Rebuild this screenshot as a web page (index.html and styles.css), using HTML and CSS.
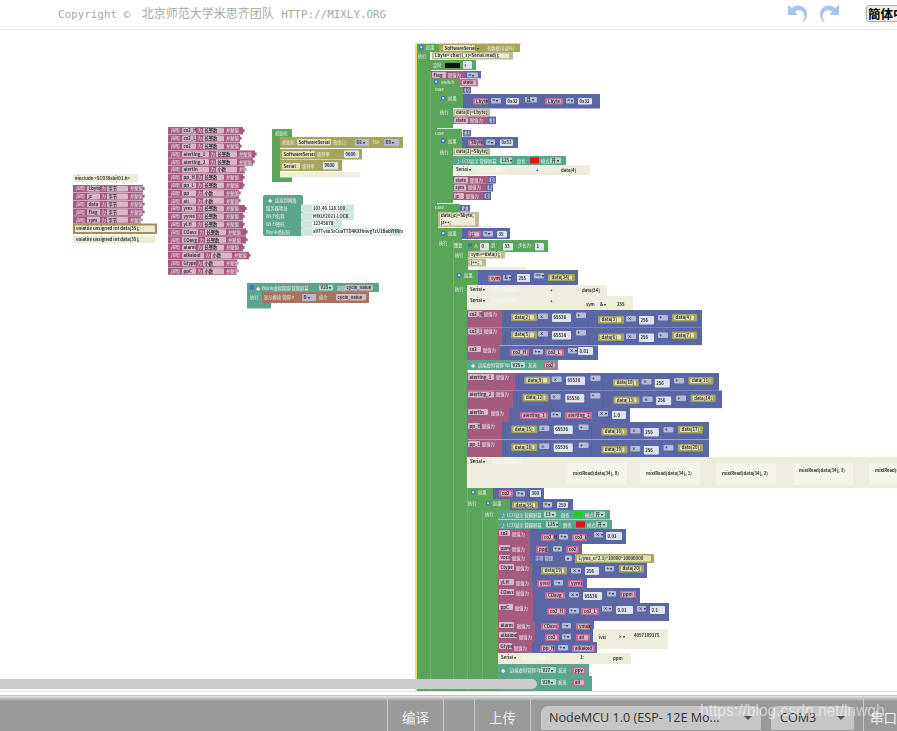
FILE: index.html
```html
<!DOCTYPE html>
<html lang="zh">
<head>
<meta charset="utf-8">
<title>Mixly</title>
<link rel="stylesheet" href="styles.css">
</head>
<body>
<header class="topbar">
  <p class="copyright">Copyright © <span class="cn">北京师范大学米思齐团队</span> HTTP://MIXLY.ORG</p>
  <div class="history">
    <svg class="hist-icon" viewBox="0 0 20 20"><path d="M0 2V12H10L7 9C10 6 15 7 16 11C17 14 16 17 14 20C19 17 20 11 18 7C15 2 8 1 4 5Z"/></svg>
    <svg class="hist-icon flip" viewBox="0 0 20 20"><path d="M0 2V12H10L7 9C10 6 15 7 16 11C17 14 16 17 14 20C19 17 20 11 18 7C15 2 8 1 4 5Z"/></svg>
  </div>
  <button class="lang">簡体中文</button>
</header>
<main class="canvas">
  <svg id="workspace" class="workspace" viewBox="0 30 897 661" xmlns="http://www.w3.org/2000/svg"></svg>
  <div class="hscroll"></div>
</main>
<div class="splitter"></div>
<footer class="toolbar">
  <div class="tool-space"></div>
  <div class="tool tool-build">编译</div>
  <div class="tool tool-gap"></div>
  <div class="tool tool-upload">上传</div>
  <div class="selects">
    <div class="select select-board"><span>NodeMCU 1.0 (ESP- 12E Mo...</span><i class="caret"></i></div>
    <div class="select select-port"><span>COM3</span><i class="caret"></i></div>
  </div>
  <div class="tool tool-serial">串口监视器</div>
  <div class="watermark">https://blog.csdn.net/lnwqh</div>
</footer>
<script src="workspace.js"></script>
</body>
</html>
```
FILE: styles.css
```css
* { box-sizing: border-box; }
html, body { margin: 0; height: 100%; }
body {
  display: flex; flex-direction: column; height: 731px; overflow: hidden;
  background: #fff; font-family: "Noto Sans CJK SC", "Liberation Sans", sans-serif;
}
.topbar {
  flex: none; height: 30px; display: flex; align-items: flex-start;
  border-bottom: 1px solid #e4e4e4; padding-left: 58px; overflow: hidden;
}
.copyright {
  flex: none; margin: 5px 0 0; width: 730px; color: #a8a8a8; white-space: pre;
  font: 10.9px/16px "DejaVu Sans Mono", monospace;
}
.cn { margin: 0 1px 0 5px; font: 12px/16px "Noto Sans CJK SC", sans-serif; }
.history { display: flex; gap: 11px; padding-top: 3px; width: 78px; flex: none; }
.hist-icon { width: 20px; height: 20px; fill: #a9c4ea; }
.flip { transform: scaleX(-1); }
.lang {
  flex: none; width: 60px; height: 17px; margin: 5px 0 0; padding: 0 0 0 1px;
  text-align: left; white-space: nowrap; overflow: hidden;
  background: #eee; border: 1px solid #aaa; border-radius: 3px; color: #000;
  font: 700 12.5px/14px "Noto Sans CJK SC", sans-serif;
}
.canvas { position: relative; flex: none; height: 661px; overflow: hidden; }
.workspace { display: block; width: 897px; height: 661px; filter: blur(.4px); }
.hscroll {
  position: absolute; left: 0; top: 649px; width: 537px; height: 10px;
  border-radius: 0 5px 5px 0; background: #ccc;
}
.splitter { flex: none; height: 5px; border-top: 1px solid #e2e2e2; border-bottom: 1px solid #c4c4c4; }
.toolbar {
  position: relative; flex: 1; display: flex; align-items: stretch; min-height: 0;
  background: linear-gradient(#e8e8e8 0, #999 5px); color: #eee;
}
.tool-space { width: 387px; flex: none; }
.tool {
  flex: none; display: flex; align-items: center; justify-content: center;
  border-left: 1px solid #c8c8c8; font-size: 13.5px; padding-top: 7px;
}
.tool-build { width: 56px; }
.tool-gap { width: 31px; }
.tool-upload { width: 57px; border-right: 1px solid #c8c8c8; }
.selects { flex: none; display: flex; gap: 10px; padding: 10px 0 0 10px; width: 332px; }
.select {
  display: flex; align-items: center; justify-content: space-between; height: 24px;
  border-radius: 7px 7px 0 0; background: #c6c6c6; color: #333; padding: 0 9px 0 8px;
  font: 12.6px/24px "Open Sans", sans-serif; white-space: nowrap;
}
.select-board { width: 220px; }
.select-port { width: 83px; padding-left: 9px; }
.caret { width: 0; height: 0; border: 4px solid transparent; border-top: 4px solid #555; border-bottom: 0; }
.tool-serial {
  flex: 1; justify-content: flex-start; padding-left: 6px; white-space: nowrap; overflow: hidden;
}
.watermark {
  position: absolute; left: 700px; top: 5px; color: rgba(255,255,255,.55);
  font: 15.6px/20px "Liberation Sans", sans-serif; white-space: nowrap;
}
/* Blocks */
.g { fill: #5ba55b; } .gl { fill: #74b574; }
.y { fill: #e6df62; }
.p { fill: #a55b80; } .fp { fill: #d8b8c8; } .pk { fill: #c76a96; }
.b { fill: #5b67a5; } .fb { fill: #b4bad8; } .fn { fill: #dfe4f2; }
.be { fill: #4f5a97; }
.t { fill: #5ba58c; } .ft { fill: #b4d8cc; } .st { fill: #cfe6de; }
.o { fill: #a5a55b; } .fo { fill: #e2e2bc; }
.br { fill: #a5745b; }
.c { fill: #efeede; } .fc { fill: #f5f4e9; }
.k { fill: #bcbc92; } .kk { fill: #ecebd6; } .sel { fill: #a58e58; }
.ic { fill: #3c74b4; } .iw { fill: #d8e6f0; }
.red { fill: #e81414; } .grn { fill: #1ed01e; } .blk { fill: #111; }
.w { fill: #fff; }
text { font: 4.3px "Noto Sans CJK SC", "Liberation Sans", sans-serif; }
.lw { fill: #f0f0f0; }
.ld { fill: #333; font-weight: 700; }
.lf { fill: #fff; opacity: .75; }
```
FILE: workspace.js
```js
const svg = document.getElementById('workspace');
const NS = 'http://www.w3.org/2000/svg';
function add(tag, attrs, text) {
  const e = document.createElementNS(NS, tag);
  for (const k in attrs) e.setAttribute(k, attrs[k]);
  if (text !== undefined) e.textContent = text;
  svg.appendChild(e);
}
const r = (c, x, y, w, h, rx = 0) => add('rect', { class: c, x, y, width: w, height: h, rx });
const t = (x, y, s, c = 'lw') => add('text', { class: c, x, y }, s);
const f = (c, x, y, w, h, s) => { r(c, x, y, w, h, 1); t(x + 1.5, y + h / 2 + 1.6, s, 'ld'); };

/* declaration row: 声明 name 为 type 并赋值 */
function decl(x, y, end, name, nw, type) {
  r('p', x, y, end - x, 7.4);
  r('p', end, y + 2, 1.6, 3);
  t(x + 3, y + 5.4, '声明');
  f('fp', x + 14, y + .8, nw, 5.8, name);
  t(x + 15.5 + nw, y + 5.4, '为');
  const fx = x + 21 + nw;
  f('fp', fx, y + .8, 21, 5.8, type);
  t(fx + 23, y + 5.4, '并赋值');
}
function code(x, y, w, h, s, c = 'k') {
  r(c, x, y, w, h);
  r('kk', x + 2, y + 1.5, w - 6, h - 3);
  s.split('|').forEach((ln, i) => t(x + 3, y + 5.4 + i * 7, ln, 'ld'));
}
function assign(x, y, w, h, name, nw) {
  r('p', x, y, w, h);
  f('fp', x + 1, y + 1, nw, 6, name);
  t(x + nw + 3, y + 5.6, '赋值为');
}
function hat(x, y, s) {
  r('ic', x, y, 4.5, 4.5, 1); r('iw', x + 1.2, y + 1.2, 2, 2);
  t(x + 7, y + 4.4, s);
}
function olive(x, y, w, h, s) { r('o', x, y, w, h, 1); r('fo', x + 2, y + 1.5, w - 5, h - 3, 1); t(x + 3.5, y + h / 2 + 1.6, s, 'ld'); }
function pink(x, y, w, h, s) { r('pk', x, y, w, h, 1); r('fp', x + 2, y + 1.2, w - 4, h - 2.4, 1); t(x + 3, y + h / 2 + 1.6, s, 'ld'); }
function op(x, y, w, s = '×') { f('fb', x, y, w, 5.5, s); }
function num(x, y, w, h, s) { f('fn', x, y, w, h, s); }
function longRow(bx, y, w, pinkName, nw, a, b, c) {
  const h = 17.6;
  assign(467, y, bx - 467, h, pinkName, nw);
  r('b', bx, y, w, h);
  r('be', bx + 3, y + 2, .6, h - 4);
  const k = w / 200;
  const X = v => bx + v * k;
  olive(X(9), y + 3.6, 26, 7.5, a);
  op(X(36), y + 3.6, 10);
  num(X(50), y + 3.6, 19, 8.5, 65536);
  op(X(74), y + 2.6, 10, '+');
  r('be', X(86), y + 1.5, .6, h - 3);
  olive(X(96), y + 6, 26, 7.5, b);
  op(X(124), y + 6, 10);
  num(X(137), y + 6, 15, 8.5, 256);
  op(X(156), y + 5, 10, '+');
  olive(X(170), y + 4, 25, 7.5, c);
}
function serial(x, y, w, h, parts) {
  r('c', x, y, w, h);
  t(x + 3, y + 6, 'Serial ▾', 'ld');
  t(x + 24, y + 6, '打印(自动换行)', 'lf');
  parts.forEach(p => t(x + p[0], y + p[1], p[2], 'ld'));
}
function lcd(x, y, w, ms, color, colorX) {
  r('t', x, y, w, 9.5);
  t(x + 3, y + 6.5, '♪');
  t(x + 9, y + 6.5, 'LCD显示 管脚屏幕');
  f('ft', colorX - 30, y + 1.5, 12, 6, ms);
  t(colorX - 13, y + 6.5, '颜色');
  r(color, colorX, y + 1.5, 9, 6);
  t(colorX + 11, y + 6.5, '模式');
  f('ft', colorX + 20, y + 1.5, 11, 6, '开 ▾');
}

/* left group: include + declarations */
r('c', 73, 174, 65, 8.5);
t(75, 180, '#include <SCD30sbit01.h>', 'ld');
[[143, 'Lbyte', 13, '字节'], [143, 'jz', 13, '字节'], [143, 'data', 13, '字节'], [143, 'Flag', 13, '字节'], [141, 'sym', 13, '字节']]
  .forEach((d, i) => decl(73, 185 + i * 7.8, d[0], d[1], d[2], d[3]));
r('sel', 73, 223.5, 84, 10.5);
r('kk', 75, 225.5, 80, 6.5);
t(76, 230.4, 'volatile unsigned int data[35];', 'ld');
r('kk', 73, 236, 82, 7);
t(76, 241.4, 'volatile unsigned int data[35];', 'ld');

/* second column of declarations */
[[243, 'co2_H', 14, '长整数'], [240, 'co2_L', 14, '长整数'], [240, 'co2', 14, '长整数'], [255, 'alertIng_1', 27, '长整数'],
 [253, 'alertIng_2', 27, '长整数'], [245, 'alertIn', 27, '小数'], [243, 'pp_H', 14, '长整数'], [243, 'pp_L', 14, '长整数'],
 [239, 'pp', 14, '小数'], [239, 'all', 14, '小数'], [245, 'yres', 14, '长整数'], [243, 'yyres', 14, '长整数'], [243, 'yLH', 14, '长整数'],
 [246, 'COavs', 16, '长整数'], [246, 'COavg', 16, '长整数'], [243, 'alarm', 14, '长整数'], [249, 'alkaloid', 22, '小数'],
 [237, 'Gtype', 14, '小数'], [237, 'ppC', 14, '小数']]
  .forEach((d, i) => decl(168, 127 + i * 7.8, d[0], d[1], d[2], d[3]));

/* setup group */
r('g', 272, 129, 20, 8); t(275, 135, '初始化');
r('g', 272, 137, 8, 45); r('g', 272, 177, 20, 5);
r('o', 280, 137, 123, 11);
t(282, 144, '初始化'); f('fo', 297, 139, 34, 6.5, 'SoftwareSerial'); t(333, 144, '软串口');
f('fb', 355, 139, 14, 7, 'D1 ▾'); t(372, 144, 'TX#'); f('fb', 384, 139, 15, 7, 'D5 ▾');
r('o', 280, 149, 82, 10.5);
f('fo', 282, 151, 33, 6.5, 'SoftwareSerial'); t(317, 156, '波特率'); f('fn', 344, 150.5, 15, 7.5, 9600);
r('o', 280, 160, 62, 11);
f('fo', 282, 163, 18, 6.5, 'Serial'); t(302, 168, '波特率'); f('fn', 323, 162, 15, 7.5, 9600);
r('c', 280, 172, 80, 5.5);

/* wifi group */
r('t', 263, 195, 40, 41, 2);
t(268, 202, '◆'); t(275, 202, '连接到网络');
[['服务器地址', 354, '103.46.128.100'], ['Wi-Fi名称', 354, 'MIXLY2021-LOCK'], ['Wi-Fi密码', 342, '12345678'], ['Blynk授权码', 401, 'aV7Tvso3sCuaTTD4KXHmvg7zU1BabYHRrs']]
  .forEach((d, i) => {
    const y = 204.5 + i * 7.9;
    t(266, y + 5.4, d[0]);
    r('st', 301, y, d[1] - 301, 7.6, 1);
    r('w', 312, y + 1, d[1] - 312 - 11, 5.6, 1);
    t(313, y + 5.1, d[2], 'ld');
  });

/* blynk group */
r('t', 247, 283, 132, 9); r('t', 247, 292, 15, 11); r('t', 247, 303, 24, 5.5);
r('ic', 249.5, 285, 4.5, 4.5, 1); t(256, 290, '◆');
t(262, 290, 'Blynk虚拟管脚 管脚屏幕'); f('ft', 319, 285, 14, 5.5, 'V25 ▾'); t(337, 290, '获取');
f('fp', 345, 285, 28, 5.5, 'cycle_value');
t(250, 299, '执行');
r('br', 262, 292, 107, 11);
t(264, 299, '显示模块 管脚 #'); f('fb', 302, 294, 14, 7, 'D ▾'); t(319, 299, '值为');
f('fp', 336, 294, 30, 6.5, 'cycle_value');

/* main loop block: green frame */
r('y', 415, 43, 2, 648);
r('y', 415, 43, 107, 1);
r('g', 417, 44, 23, 8);
r('g', 417, 52, 13, 639);
r('g', 430, 60, 46, 10);
r('g', 430, 70, 1, 18);
r('g', 430, 78, 30, 10);
r('g', 430, 87, 33, 21);
r('g', 430, 108, 23, 20);
r('g', 430, 128, 32, 20);
r('g', 430, 148, 23, 56);
r('g', 430, 204, 30, 8);
r('g', 430, 212, 8, 16);
r('g', 430, 228, 32, 12);
r('g', 430, 240, 22, 451);
r('g', 452, 240, 96, 12);
r('g', 452, 252, 16, 18);
r('g', 452, 270, 26, 15);
r('g', 452, 285, 15, 406);
r('g', 467, 488, 26, 11);
r('g', 467, 499, 43, 11);
r('g', 467, 510, 31, 181);
[[430, 70, 621], [453, 240, 451], [467, 285, 406], [482, 510, 181]].forEach(l => r('gl', l[0], l[1], .8, l[2]));
r('w', 437, 128, 25, .8); r('w', 437, 203, 25, .8);

/* if SoftwareSerial.available */
hat(419, 45, '如果');
r('o', 439, 44, 81, 8);
f('fo', 443, 45, 32, 6, 'SoftwareSerial ▾'); t(487, 50, '有数据可读吗?');
t(418, 57.5, '执行');
code(432, 52, 81, 7.5, 'Lbyte= char(l_s)=Serial.read();');
t(433, 67, '定时'); r('blk', 445, 63, 15, 5); f('fn', 463, 61, 9, 8, 'i');
assign(431, 71, 34, 7.4, 'Flag', 14);
r('b', 465, 71, 16, 7.4); f('fb', 467, 72.5, 11, 5, '= ▾');
hat(434, 79.5, 'switch'); pink(460, 79, 18, 7.4, 'state');
t(435, 91, 'case'); r('b', 463, 87, 8, 6.5); f('fb', 464.5, 88, 5, 4.5, '0');

hat(441, 96, '如果');
r('b', 463, 94, 137, 14.5);
pink(473, 98, 15, 6.5, 'Lbyte'); op(491, 98, 10, '= ▾'); num(506, 98, 13, 6.5, '0x32');
op(525, 97, 12, '且 ▾');
pink(545, 98, 18, 6.5, 'Lbyte'); op(566, 98, 8, '= ▾'); num(578, 98, 14, 6.5, '0x32');
t(440, 114, '执行');
code(453, 109, 37, 7.4, 'data[0]=Lbyte;');
assign(453, 116.5, 35, 7.6, 'state', 14);
r('b', 488, 116.5, 8, 7.6); f('fb', 489.5, 118, 5, 4.8, '1');

t(435, 135, 'case'); r('b', 463, 130, 8, 6.5); f('fb', 464.5, 131, 5, 4.5, '1');
hat(441, 138.5, '如果');
r('b', 462, 137, 56, 11);
pink(468, 139.5, 15, 6.5, 'Sbyte'); op(486, 139.5, 9, '= ▾'); num(500, 139.5, 13, 6.5, '0x53');
t(440, 154, '执行');
code(453, 148, 37, 7.4, 'data[1]=Sbyte;');
lcd(453, 156, 113, '125 ▾', 'red', 530);
serial(453, 165, 137, 10, [[83, 7, '+'], [108, 7, 'data[4]']]);
assign(453, 176, 35, 7.5, 'state', 14); r('b', 488, 176, 8, 7.5); f('fb', 489.5, 177.5, 5, 4.8, '0');
assign(453, 183.5, 33, 8, 'sym', 12); r('b', 486, 183.5, 7, 8); f('fb', 487.5, 185, 4.5, 5, '0');
assign(453, 192, 30, 8, 'jz', 10); r('b', 483, 192, 8, 8); f('fb', 484.5, 193.5, 5, 5, '0');

t(435, 209, 'case'); r('b', 460, 205, 10, 6.5); f('fb', 462, 206, 6, 4.5, '2');
code(438, 212, 41, 15, 'data[jz]=Sbyte;|jz++;');

hat(441, 231, '如果');
r('b', 462, 228, 48, 11);
pink(468, 231, 13, 6.5, 'jz'); op(483, 231, 10, '= ▾'); num(497, 231, 10, 6.5, '35');
t(439, 245, '执行');
t(454, 247, '重复'); r('ic', 468, 243, 4, 4); t(474, 247, '从'); f('fn', 480, 243, 9, 7.5, '0');
t(491, 247, '到'); f('fn', 503, 243, 10, 7.5, '33'); t(518, 247, '步长为'); f('fn', 535, 243, 9, 7.5, '1');
t(455, 257, '执行');
code(468, 251, 37, 7.5, 'sym+=data[i];');
code(468, 259, 18, 7.5, 'j++;');
r('c', 478, 267, 48, 3.5);

hat(457, 273, '如果');
r('b', 478, 270, 100, 15);
pink(488, 275, 13, 7, 'sym'); op(503, 275, 8, '& ▾'); f('fn', 517, 274, 13, 8, '255');
op(534, 273, 10, '== ▾'); olive(548, 274, 27, 7, 'data[34]');
t(455, 291, '执行');
serial(467, 285, 140, 11, [[83, 7, '+'], [115, 7, 'data[34]']]);
serial(467, 296, 166, 14, [[83, 7, '+'], [119, 10, 'sym'], [133, 10, '& ▾'], [150, 10, '255']]);

longRow(502, 310, 200, 'co2_H', 14, 'data[2]', 'data[3]', 'data[4]');
longRow(502, 327.5, 200, 'co2_L', 14, 'data[5]', 'data[6]', 'data[7]');
r('p', 467, 345, 33, 15); f('fp', 468, 346, 13, 6, 'co2'); t(483, 352, '赋值为');
r('b', 500, 345.5, 98, 14.5);
pink(510, 349, 19, 7, 'co2_H'); op(533, 349, 10, '+ ▾'); pink(545, 349, 19, 7, 'co2_L'); op(568, 348, 9, '× ▾'); num(578, 347, 15, 8, '0.01');
r('t', 467, 360, 91, 10);
t(471, 367, '◆'); t(478, 367, '远端虚拟管脚 Vp'); f('ft', 511, 362, 14, 6, 'V25 ▾'); t(528, 367, '发送');
pink(543, 362, 14, 6.5, 'co2');

longRow(515, 373, 204, 'alertIng_1', 26, 'data[9]', 'data[10]', 'data[11]');
longRow(513, 390.5, 209, 'alertIng_2', 26, 'data[12]', 'data[13]', 'data[14]');
r('p', 467, 408, 42, 14); f('fp', 468, 409, 20, 6, 'alertIn'); t(491, 415, '赋值为');
r('b', 509, 408, 121, 14);
pink(520, 412, 28, 7, 'alertIng_1'); op(551, 412, 10, '+ ▾'); pink(565, 412, 27, 7, 'alertIng_2'); op(598, 411, 10, '× ▾'); num(612, 411, 14, 8, '1.0');
longRow(502, 422, 207, 'pp_H', 12, 'data[15]', 'data[16]', 'data[17]');
longRow(502, 440, 207, 'pp_L', 12, 'data[18]', 'data[19]', 'data[20]');
r('c', 467, 457, 430, 31);
t(470, 463, 'Serial ▾', 'ld'); t(493, 463, '打印(自动换行)', 'lf');
[[573, 'mixlRead(data[34], 0)'], [646, 'mixlRead(data[34], 1)'], [722, 'mixlRead(data[34], 2)'], [799, 'mixlRead(data[34], 3)'], [875, 'mixlRead(data[34], 4)']]
  .forEach((d, i) => { r('fc', d[0] - 6, 463, 60, 22); t(d[0], i > 2 ? 472 : 475, d[1], 'ld'); });

hat(471, 490, '如果');
r('b', 493, 488, 51, 11);
pink(499, 490, 14, 7, 'co2'); op(516, 491, 9, '> ▾'); num(530, 490, 11, 7, '300');
t(468, 505, '执行');
hat(486, 501, '如果');
r('b', 510, 499, 63, 11);
olive(512, 501.5, 26, 7, 'data[35]'); op(543, 502, 9, '= ▾'); num(557, 502, 11, 6, '250');
t(485, 516, '执行');
lcd(498, 510, 112, '13 ▾', 'grn', 574);
lcd(498, 520, 114, '125 ▾', 'red', 576);
r('p', 498, 529, 32, 15); f('fp', 499, 530, 11, 6, 'co2'); t(512, 536, '赋值为');
r('b', 530, 529, 96, 15);
pink(541, 534, 14, 7, 'co2_H'); op(559, 534, 9, '+ ▾'); pink(572, 534, 15, 7, 'co2_L'); op(594, 532, 9, '× ▾'); num(606, 532, 16, 8, '0.01');
r('p', 498, 544, 32, 10); f('fp', 499, 545, 11, 6, 'ppm'); t(512, 551, '赋值为');
r('b', 530, 544, 52, 10);
pink(536, 546, 12, 7, 'ppg'); op(553, 546, 9, '+ ▾'); pink(566, 546, 13, 7, 'co2');
r('p', 498, 554, 32, 9); f('fp', 499, 555, 11, 5.5, 'vocs'); t(512, 560, '赋值为');
r('b', 530, 554, 45, 9); t(535, 560, '字符 管理'); op(565, 555.5, 7, '▾');
olive(575, 554, 79, 9, 'L/(ms_u*2.1)*10000*10000000');
r('p', 498, 563, 34, 15); f('fp', 499, 564, 15, 6, 'Ctype'); t(516, 570, '赋值为');
r('b', 532, 563, 115, 15);
olive(541, 567, 26, 7.5, 'data[19]'); op(571, 568, 10, '× ▾'); num(585, 567, 14, 8, '256'); op(605, 566, 9, '+ ▾'); olive(619, 565, 25, 7.5, 'data[20]');
r('p', 498, 578, 34, 10); f('fp', 499, 579, 15, 6, 'yLH'); t(516, 585, '赋值为');
r('b', 532, 578, 55, 10);
pink(537, 580, 14, 7, 'yres'); op(554, 580, 9, '- ▾'); pink(568, 580, 15, 7, 'yyres');
r('p', 498, 588, 35, 15); f('fp', 499, 589, 15, 6, 'COavs'); t(516, 595, '赋值为');
r('b', 533, 588, 107, 15);
pink(545, 592, 20, 7, 'COavg'); op(569, 592, 10, '× ▾'); num(583, 592, 19, 8, 65536); op(607, 591, 9, '+ ▾'); pink(620, 591, 16, 7, 'ppm');
r('p', 498, 603, 35, 18); f('fp', 499, 604, 14, 6, 'ppC'); t(515, 610, '赋值为');
r('b', 533, 603, 136, 18);
pink(547, 608, 19, 7, 'co2_H'); op(569, 608, 10, '+ ▾'); pink(581, 608, 18, 7, 'co2_L'); op(602, 606, 10, '× ▾'); num(616, 606, 17, 8, '0.01'); op(637, 606, 9, '× ▾'); num(650, 606, 15, 8, '2.1');
r('p', 498, 621, 37, 10); f('fp', 499, 622, 15, 6, 'alarm'); t(517, 628, '赋值为');
r('b', 535, 621, 59, 10);
pink(541, 623, 18, 7, 'COavs'); op(562, 623, 9, '- ▾'); pink(576, 623, 14, 7, 'ymax');
r('p', 498, 631, 37, 11); f('fp', 499, 632, 18, 6, 'alkaloid'); t(519, 639, '赋值为');
r('b', 535, 631, 58, 11);
pink(545, 634, 14, 7, 'co2'); op(562, 634, 9, '+ ▾'); pink(576, 634, 14, 7, 'all');
r('c', 593, 629, 75, 20);
t(599, 639, 'ivis', 'ld'); t(618, 638, '× ▾', 'ld'); t(634, 637, '4057109375', 'ld');
r('p', 498, 642, 34, 11); f('fp', 499, 643, 13, 6, 'Gtype'); t(514, 650, '赋值为');
r('b', 532, 642, 65, 11);
pink(540, 645, 15, 7, 'pp_H'); op(558, 645, 10, '+ ▾'); pink(572, 645, 23, 7, 'alkaloid');
serial(498, 653, 133, 11, [[82, 6, '1:'], [115, 7, 'ppm']]);
r('t', 498, 664, 91, 27); r('t', 589, 676, 3, 15);
t(501, 672, '◆'); t(510, 672, '远端虚拟管脚 Vp'); f('ft', 541, 667, 15, 6, 'V27 ▾'); t(558, 672, '发送');
pink(572, 667, 14, 7, 'ppv');
f('ft', 541, 679, 15, 6, 'V29 ▾'); t(558, 684, '发送'); pink(572, 679, 14, 7, 'all');
```
